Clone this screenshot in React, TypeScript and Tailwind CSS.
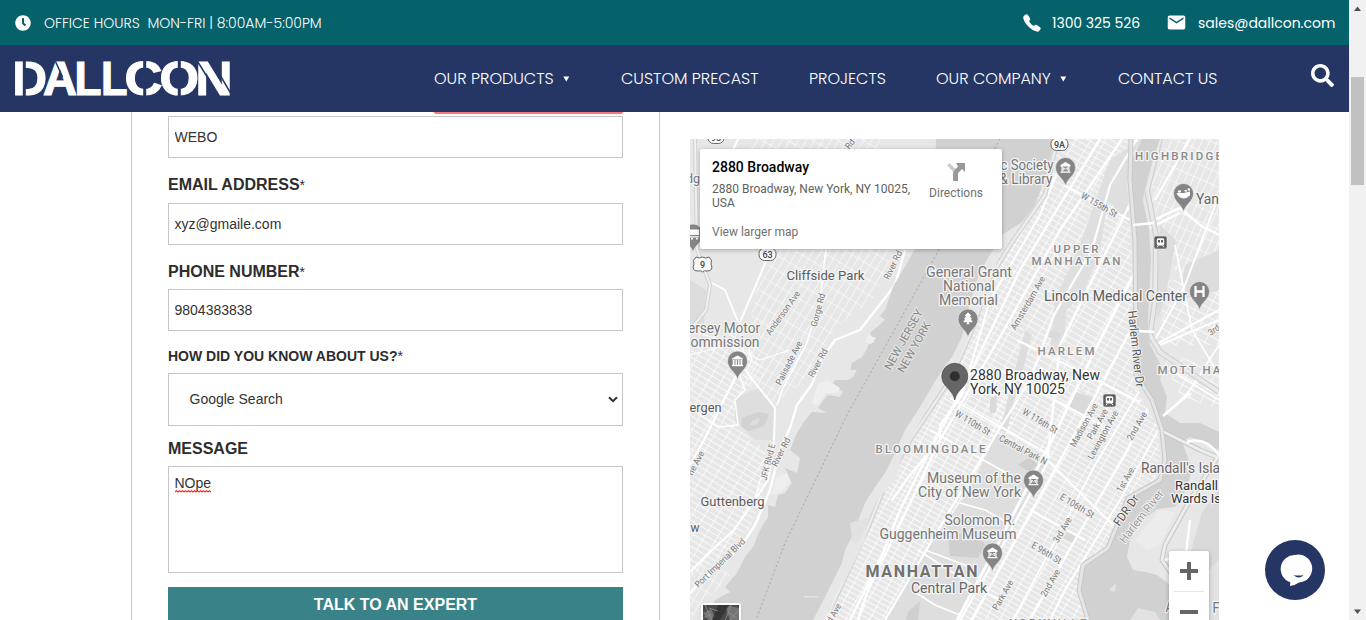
import React from "react";
import { FaClock, FaSearch, FaTree } from "react-icons/fa";
import { IoCall } from "react-icons/io5";
import { MdEmail } from "react-icons/md";

const POPPINS = "font-['Poppins','Inter','Liberation_Sans',sans-serif]";
const ARIAL = "font-['Liberation_Sans',Arial,sans-serif]";

/* ---------- header ---------- */

const logoGlyphs = [
  { c: "D", x: 12.5, w: 34.5 },
  { c: "A", x: 43, w: 34 },
  { c: "L", x: 74.5, w: 27 },
  { c: "L", x: 101, w: 26.5 },
  { c: "C", x: 124.5, w: 38 },
  { c: "O", x: 159.5, w: 39.5 },
  { c: "N", x: 195.5, w: 37 },
];

function Logo() {
  return (
    <svg width="217" height="38" viewBox="14 59 217 38" aria-label="Dallcon">
      <g fill="#fff" fontFamily="Liberation Sans" fontWeight="700" fontSize="48.5">
        {logoGlyphs.map((g, i) => (
          <text key={i} x={g.x} y="93.7" textLength={g.w} lengthAdjust="spacingAndGlyphs" stroke="#fff" strokeWidth="1.2">
            {g.c}
          </text>
        ))}
      </g>
      <g stroke="#253665" fill="none">
        <path d="M24.3 58V98M144.7 58V69M144.7 86V98M179.3 58V98" strokeWidth="3" />
        <path d="M55.5 60.5L62.5 76M197 59.5L209 79M220 74L231.5 93.5" strokeWidth="1.5" />
      </g>
    </svg>
  );
}

function Caret() {
  return (
    <svg width="7" height="6" viewBox="0 0 7 6" className="ml-[9px]">
      <path d="M.3 .5h6L3.3 5.5z" fill="#fff" />
    </svg>
  );
}

function Header() {
  return (
    <header className={`text-white ${POPPINS}`}>
      <div className="flex h-[45px] items-center bg-[#05626b] pl-[15px] pr-[15px] text-sm">
        <FaClock size={16} />
        <span className="ml-[13px] whitespace-pre font-light">OFFICE HOURS  MON-FRI | 8:00AM-5:00PM</span>
        <div className="ml-auto flex items-center">
          <IoCall size={20} />
          <span className="ml-[10px] w-[89px] whitespace-nowrap tracking-[-0.05px]">1300 325 526</span>
          <MdEmail size={21} className="ml-[25px]" />
          <span className="ml-[11px] w-[136px] whitespace-nowrap">sales@dallcon.com</span>
        </div>
      </div>
      <div className="flex h-[67px] items-center bg-[#253665] pl-[14px] pr-[15px]">
        <Logo />
        <nav className="ml-[203px] flex items-center whitespace-nowrap text-base font-light">
          <a className="flex w-[187px] items-center">OUR PRODUCTS<Caret /></a>
          <a className="w-[188px]">CUSTOM PRECAST</a>
          <a className="w-[127px]">PROJECTS</a>
          <a className="flex w-[182px] items-center">OUR COMPANY<Caret /></a>
          <a>CONTACT US</a>
        </nav>
        <FaSearch size={23} className="-mt-[7px] ml-auto" />
      </div>
    </header>
  );
}

/* ---------- form ---------- */

const label = "text-base font-bold leading-6 text-[#2d2d2d]";
const field = "block h-[42px] w-full border border-[#c6c6c6] bg-white px-[5.5px] text-sm text-[#333] outline-none";

function Star() {
  return <span className="text-sm font-normal">*</span>;
}

function ContactForm() {
  return (
    <form className={`h-[508px] w-[529px] overflow-hidden border-x border-[#c6c6c6] pl-[36px] pr-[36px] ${ARIAL}`}>
      <div className="mb-[2px] ml-auto h-[2px] w-[189px] rounded-b bg-[#f4777b]" />
      <input className={field} defaultValue="WEBO" />
      <div className={`h-[45px] pt-[15px] ${label}`}>EMAIL ADDRESS<Star /></div>
      <input className={field} defaultValue="xyz@gmaile.com" />
      <div className={`h-[44px] pt-[15px] ${label}`}>PHONE NUMBER<Star /></div>
      <input className={field} defaultValue="9804383838" />
      <div className="h-[42px] pt-[13px] text-sm font-bold leading-6 text-[#2d2d2d]">HOW DID YOU KNOW ABOUT US?<Star /></div>
      <div className="flex h-[53px] items-center justify-between border border-[#c6c6c6] pb-px pl-[20.5px] pr-1 text-sm text-[#333]">
        <span>Google Search</span>
        <svg width="10" height="7" viewBox="0 0 10 7">
          <path d="M1 1.2L5 5.2L9 1.2" fill="none" stroke="#333" strokeWidth="2" />
        </svg>
      </div>
      <div className={`h-[40px] pt-[11px] ${label}`}>MESSAGE</div>
      <div className="h-[107px] border border-[#c6c6c6] px-[5.5px] pt-[6px] text-sm text-[#333]">
        <span className="inline-block">
          NOpe
          <svg width="37" height="3" viewBox="0 0 37 3" className="-mt-[3px] block">
            <path d="M0 2L1.5 .7L3 2L4.5 .7L6 2L7.5 .7L9 2L10.5 .7L12 2L13.5 .7L15 2L16.5 .7L18 2L19.5 .7L21 2L22.5 .7L24 2L25.5 .7L27 2L28.5 .7L30 2L31.5 .7L33 2L34.5 .7L36 2" fill="none" stroke="#f22" strokeWidth="1.1" />
          </svg>
        </span>
      </div>
      <button type="button" className="mt-[14px] h-[34px] w-full bg-[#388288] pt-px text-base font-bold text-white">TALK TO AN EXPERT</button>
    </form>
  );
}

/* ---------- map ---------- */

const HUDSON =
  "M936 139L934 200L915 249L907 263L893 287L885 310L880 316L885 320L877 327L870 333L875 342L868 345L868 347L862 357L852 363L850 370L857 370L853 377L848 380L835 380L832 385L843 392L840 397L828 395L822 402L818 408L827 413L812 412L803 423L795 437L790 450L800 458L797 473L785 468L792 483L785 493L778 495L775 507L768 505L768 517L760 530L753 547L745 557L737 573L725 587L730 592L715 600L705 620L813 620L822 603L832 583L842 563L845 550L852 537L857 523L865 503L875 487L885 473L895 453L905 430L918 410L930 390L942 370L952 357L962 337L968 310L978 277L985 263L1002 235L1022 222L1035 205L1047 173L1053 147L1056 139Z";
const HARLEM_RIVER =
  "M1142 139L1132 160L1129 185L1133 225L1135 250L1136 300L1139 340L1140 380L1142 387L1153 403L1160 420L1163 437L1165 457L1163 473L1155 483L1143 490L1127 503L1117 527L1107 547L1093 558L1082 570L1078 583L1082 603L1088 620L1170 620L1170 585L1157 575L1150 573L1133 570L1127 557L1130 540L1140 523L1157 509L1175 507L1186 490L1192 470L1188 458L1182 442L1190 437L1219 450L1219 432L1200 423L1180 423L1165 413L1167 397L1160 380L1162 367L1150 345L1148 320L1151 260L1149 230L1143 200L1148 175L1160 139Z";
const MANHATTAN =
  "M1056 139L1053 147L1047 173L1035 205L1022 222L1002 250L992 275L978 310L968 337L958 360L945 382L932 400L918 425L902 455L895 480L877 500L868 520L865 540L850 570L838 590L824 620L1086 620L1080 590L1084 567L1105 547L1117 527L1127 500L1155 480L1160 455L1157 425L1142 400L1136 380L1134 300L1130 225L1127 185L1131 155L1142 139Z";
const JERSEY =
  "M690 139H936L934 200L915 249L893 287L880 316L868 333L850 363L830 380L810 412L795 437L785 468L768 505L750 547L725 587L700 620H690Z";
const BRONX = "M1160 139L1148 175L1143 200L1149 230L1151 260L1148 320L1150 345L1162 367L1172 400L1219 440V139Z";

interface GridProps { id: string; w: number; h: number; angle: number; sw: number }
function StreetGrid({ id, w, h, angle, sw }: GridProps) {
  return (
    <pattern id={id} width={w} height={h} patternUnits="userSpaceOnUse" patternTransform={`rotate(${angle})`}>
      <path d={`M0 0H${w}M0 0V${h}`} stroke="#fff" strokeWidth={sw} fill="none" />
    </pattern>
  );
}

type L = [string, number, number, number, string?, number?, number?];
/* text, x (centre), baseline, width, colour, size, rotation */
const labels: L[] = [
  ["Cliffside Park", 825.5, 280, 78, "#5c5c5c", 13.5],
  ["General Grant", 969, 277, 86, "#777", 14],
  ["National", 969, 291, 52, "#777", 14],
  ["Memorial", 968.5, 305, 59, "#777", 14],
  ["ersey Motor", 724, 333, 72, "#777", 14],
  ["ommission", 725, 347, 69, "#777", 14],
  ["ergen", 705.5, 412, 32, "#5c5c5c", 13.5],
  ["Guttenberg", 732.5, 506, 64, "#5c5c5c", 13.5],
  ["w", 695, 532, 9, "#5c5c5c", 13.5],
  ["dg", 693, 183, 14, "#777", 13],
  ["c Society", 1027, 170, 53, "#777", 14],
  ["& Library", 1026, 184, 53, "#777", 14],
  ["Lincoln Medical Center", 1115.5, 301, 143, "#5c5c5c", 14],
  ["Museum of the", 974, 483, 94, "#777", 14],
  ["City of New York", 969.5, 497, 103, "#777", 14],
  ["Solomon R.", 980, 525, 71, "#777", 14],
  ["Guggenheim Museum", 948, 539, 137, "#777", 14],
  ["Central Park", 949, 593, 76, "#666", 14],
  ["Randall's Isla", 1180.5, 473, 79, "#666", 14],
  ["Randall", 1196.5, 490, 43, "#333", 13],
  ["Wards Is", 1196, 503, 50, "#333", 13],
  ["Yan", 1207.5, 204, 23, "#666", 14],
  ["River Rd", 893, 268, 31, "#777", 9, -64],
  ["Rd", 850, 147, 10, "#777", 9, -52],
  ["Anderson Ave", 783, 316, 52, "#777", 9, -54],
  ["Gorge Rd", 818, 313, 34, "#777", 9, -75],
  ["Palisade Ave", 789, 366, 48, "#777", 9, -63],
  ["River Rd", 818, 366, 31, "#777", 9, -62],
  ["JFK Blvd E", 768, 465, 37, "#777", 9, -76],
  ["River Rd", 781, 455, 31, "#777", 9, -63],
  ["ne Ave", 696, 466, 26, "#777", 9, -62],
  ["Port Imperial Blvd", 720, 566, 66, "#777", 9, -44],
  ["Amsterdam Ave", 1028, 306, 60, "#777", 9, -60],
  ["W 155th St", 1099, 208, 40, "#777", 9.5, 30],
  ["W 110th St", 972.5, 426, 39, "#777", 9.5, 31],
  ["W 116th St", 1040, 424, 39, "#777", 9.5, 31],
  ["Central Park N", 1023, 453, 53, "#777", 9.5, 28],
  ["Madison Ave", 1084, 428, 48, "#777", 9, -61],
  ["Park Ave", 1097.5, 427, 33, "#777", 9, -61],
  ["Lexington Ave", 1103, 438, 54, "#777", 9, -61],
  ["2nd Ave", 1137, 429, 31, "#777", 9, -60],
  ["1st Ave.", 1126, 482, 29, "#777", 9, -60],
  ["E 106th St", 1077, 509, 38, "#777", 9.5, 31],
  ["3rd Ave", 1062.5, 533, 28, "#777", 9, -60],
  ["E 96th St", 1046.5, 556, 33, "#777", 9.5, 31],
  ["2nd Ave", 1050.5, 586, 30, "#777", 9, -60],
  ["Park Ave", 1003, 598, 33, "#777", 9, -60],
  ["d Ave", 834, 616, 20, "#777", 9, -60],
  ["3rd", 1214, 333, 12, "#777", 9, -35],
  ["Harlem River", 1142, 520, 64, "#999", 11.5, -52],
  ["FDR Dr", 1127, 514, 35, "#555", 12, -55],
  ["Harlem River Dr", 1135, 352, 77, "#555", 12, 84],
  ["A", 1169.5, 612, 8, "#777", 14],
  ["F", 1216, 613, 7, "#777", 14],
];

const districts: L[] = [
  ["HIGHBRIDGE", 1178.5, 160, 87, "#8a8a8a", 11.5],
  ["UPPER", 1076, 253, 45, "#8a8a8a", 11.5],
  ["MANHATTAN", 1076, 265, 89, "#8a8a8a", 11.5],
  ["HARLEM", 1066, 355, 57, "#8a8a8a", 11.5],
  ["MOTT HA", 1189, 374, 63, "#8a8a8a", 11.5],
  ["BLOOMINGDALE", 930.5, 453, 110, "#8a8a8a", 11.5],
  ["MANHATTAN", 921.5, 577, 112, "#707070", 16],
  ["YORKVILLE", 1048, 628, 77, "#8a8a8a", 12],
];

interface MapLabelProps { l: L; weight: number; spaced?: boolean }
function MapLabel({ l, weight, spaced }: MapLabelProps) {
  const [t, x, y, w, fill, size, rot] = l;
  return (
    <text
      x={x - w / 2}
      y={y}
      textLength={w}
      lengthAdjust={spaced ? "spacing" : "spacingAndGlyphs"}
      fill={fill}
      fontSize={size}
      fontWeight={weight}
      transform={rot ? `rotate(${rot} ${x} ${y - 3})` : undefined}
      stroke="#f4f4f4"
      strokeWidth={rot ? 2 : 2.6}
      strokeLinejoin="round"
      paintOrder="stroke"
    >
      {t}
    </text>
  );
}

function Museum() {
  return (
    <g fill="#fff">
      <path d="M-5 -2.5L0 -5.5L5 -2.5V-1H-5ZM-5 4H5V5.3H-5ZM-4 -1H-2.8V4H-4ZM2.8 -1H4V4H2.8Z" />
      <path d="M-1.8 3V0L0 1.8L1.8 0V3" fill="none" stroke="#fff" strokeWidth="1" />
    </g>
  );
}

function Pin({ x, y, children }: { x: number; y: number; children: React.ReactNode }) {
  return (
    <g transform={`translate(${x} ${y})`}>
      <path d="M0 18.5C-1.5 11-10 8-10 0A10 10 0 0 1 10 0C10 8 1.5 11 0 18.5Z" fill="#858585" stroke="#eee" strokeWidth=".6" />
      {children}
    </g>
  );
}

function Station({ x, y }: { x: number; y: number }) {
  return (
    <g transform={`translate(${x} ${y})`}>
      <rect x="-6.5" y="-6.5" width="13" height="13" rx="2" fill="#5f5f5f" stroke="#eee" strokeWidth=".6" />
      <rect x="-3.7" y="-4.3" width="7.4" height="7.4" rx="1.5" fill="#fff" />
      <path d="M-2.5 -2.5H-.5V0H-2.5ZM.5 -2.5H2.5V0H.5Z" fill="#5f5f5f" />
      <path d="M-2.2 3L-3.4 4.8M2.2 3L3.4 4.8" stroke="#fff" />
    </g>
  );
}

function RouteShield({ x, y, t, w }: { x: number; y: number; t: string; w: number }) {
  return (
    <g>
      <rect x={x - w / 2} y={y - 6} width={w} height="12.5" rx="5.5" fill="#fafafa" stroke="#666" strokeWidth="1" />
      <text x={x} y={y + 3.5} textAnchor="middle" fontSize="9" fontWeight="500" fill="#444">{t}</text>
    </g>
  );
}

function CityMap() {
  return (
    <svg width="529" height="481" viewBox="690 139 529 481" className="block" fontFamily="Roboto, sans-serif">
      <defs>
        <StreetGrid id="gManhattan" w={10.5} h={5} angle={29} sw={1.5} />
        <StreetGrid id="gUptown" w={13} h={5.8} angle={30} sw={1.4} />
        <StreetGrid id="gEast" w={12.5} h={5} angle={30} sw={1.5} />
        <StreetGrid id="gJerseyN" w={7} h={13} angle={31} sw={1.1} />
        <StreetGrid id="gJerseyS" w={11} h={5.6} angle={31} sw={1.3} />
        <StreetGrid id="gBronx" w={7} h={13} angle={24} sw={1.2} />
        <StreetGrid id="gMott" w={12} h={8} angle={28} sw={1.3} />
        <clipPath id="cM"><path d={MANHATTAN} /></clipPath>
        <clipPath id="cJ"><path d={JERSEY} /></clipPath>
        <clipPath id="cB"><path d={BRONX} /></clipPath>
      </defs>
      <rect x="690" y="139" width="529" height="481" fill="#e7e7e7" />

      <g clipPath="url(#cJ)">
        <path d="M765 249L880 200L890 262L875 297L840 325L815 362L800 385L772 405L745 380L752 310Z" fill="url(#gJerseyN)" />
        <path d="M690 350L740 330L765 375L735 400L735 425L752 440L766 450L762 500L748 530L715 562L690 575Z" fill="url(#gJerseyS)" />
        <path d="M690 575L715 562L730 575L690 620Z" fill="url(#gJerseyN)" />
        <path d="M750 139H880V150H750Z" fill="url(#gJerseyN)" />
        <path d="M690 280L706 290L704 325L690 330Z" fill="#dcdcdc" />
        <path d="M735 398L758 388L776 408L772 440L755 440L735 420Z" fill="#dedede" />
        <path d="M742 418L758 412L769 414L764 426L748 431L741 426Z" fill="#d2d2d2" />
        <path d="M752 421L760 418L757 425L750 425Z" fill="#dedede" />
        <g stroke="#fff" fill="none" strokeLinejoin="round">
          <path d="M770 252L740 322L744 360L730 388L704 440L690 465" strokeWidth="2" />
          <path d="M826 249L820 300L806 345L783 388L777 405" strokeWidth="1.6" />
          <path d="M745 370L775 408L774 440L768 480L755 500L734 530L712 550L690 572" strokeWidth="2" />
          <path d="M905 250L895 285L860 330L835 340L821 360L812 384L797 405L790 428L780 450L770 490L755 525L742 545L722 565L700 582L690 594" strokeWidth="2.4" />
          <path d="M690 408L718 427L738 425L735 400L745 390L738 370" strokeWidth="1.5" />
          <path d="M710 282L725 290L738 322" strokeWidth="1.8" />
          <path d="M746 372L752 360L748 346M770 460L760 480L755 500" strokeWidth="1.4" />
          <path d="M690 355L728 345L760 360L790 350M690 330L720 340" strokeWidth="1.2" />
        </g>
        <path d="M695 139L697 249L710 285L706 310L690 330" stroke="#d2d2d2" strokeWidth="4" fill="none" />
        <path d="M695 139L697 249L710 285L706 310L690 330" stroke="#f1f1f1" strokeWidth="2" fill="none" />
        <path d="M738 139L710 200L700 240" stroke="#fff" strokeWidth="2" fill="none" />
      </g>

      <g clipPath="url(#cM)">
        <rect x="800" y="390" width="240" height="230" fill="url(#gManhattan)" />
        <rect x="940" y="139" width="210" height="251" fill="url(#gUptown)" />
        <path d="M1020 390H1170V620H960Z" fill="#e7e7e7" />
        <path d="M1000 390H1170V620H950Z" fill="url(#gEast)" />
        <path d="M1110 160L1142 139L1128 185L1130 225L1108 200L1100 250L1085 290L1067 310L1062 350L1050 350L1055 300L1078 250Z" fill="#dfdfdf" />
        <path d="M1000 430L1025 330L1032 335L1006 433Z" fill="#dddddd" />
        <path d="M990 398L997 395L996 412L990 414Z" fill="#dadada" />
        <path d="M1076 392L1095 398L1088 416L1068 408Z" fill="#dadada" />
        <path d="M1050 330L1060 333L1058 340L1048 337ZM1068 530L1078 535L1073 543L1063 538Z" fill="#dadada" />
        <path d="M997 433L1047 463L1027 503L1000 550L960 620H885L918 560L968 493Z" fill="#dedede" />
        <path d="M948 537L975 530L985 545L978 558L950 556Z" fill="#cfcfcf" />
        <path d="M1018 465L1030 457L1038 465L1030 472ZM908 612L920 601L918 620H906Z" fill="#cfcfcf" />
        <g stroke="#fff" fill="none" strokeLinejoin="round">
          <path d="M1100 139L1020 270L957 400L930 450L900 510L880 560L850 620" strokeWidth="2.4" />
          <path d="M1122 139L1060 230L1004 330L940 440L902 520L868 590L858 620" strokeWidth="2.4" />
          <path d="M1060 165L1040 215L990 300L962 395L940 425L940 440L910 475L892 500" strokeWidth="2.2" />
          <path d="M1137 139L1110 185L1092 250L1054 315L1030 380L997 433L950 510L885 620" strokeWidth="2.2" />
          <path d="M1132 200L1060 345L1047 463L1000 550L960 620" strokeWidth="2.4" />
          <path d="M1136 270L1095 350L1052 440L1000 540L957 620" strokeWidth="2.8" />
          <path d="M1136 320L1105 378L1063 455L1010 550L972 620" strokeWidth="2.4" />
          <path d="M1140 390L1095 465L1045 560L1013 620" strokeWidth="1.8" />
          <path d="M1152 400L1125 455L1075 540L1030 620" strokeWidth="2" />
          <path d="M1161 425L1120 500L1065 590L1050 620" strokeWidth="2" />
          <path d="M1064 185L1130 220M1017 340L1140 402M950 398L1050 455M1042 455L1115 527M1000 370L1110 430M1030 510L1085 540M930 430L1010 475M918 550L980 590L1000 600" strokeWidth="2" />
          <path d="M960 503L985 510L1010 524M925 550L965 565L990 590M915 592L935 605L960 615" strokeWidth="1.6" />
        </g>
        <g fill="none">
          <path d="M1056 145L1045 195L1010 245L990 278L972 330L950 380L910 440L885 485L865 535L830 610" stroke="#d5d5d5" strokeWidth="5" />
          <path d="M1056 145L1045 195L1010 245L990 278L972 330L950 380L910 440L885 485L865 535L830 610" stroke="#ededed" strokeWidth="2.2" />
        </g>
      </g>

      <g clipPath="url(#cB)">
        <path d="M1165 139H1219V280H1180L1154 230L1150 190Z" fill="url(#gBronx)" />
        <path d="M1165 280H1219V345H1160Z" fill="url(#gMott)" />
        <path d="M1158 350L1219 370V410L1180 395Z" fill="url(#gMott)" />
        <path d="M1160 225L1176 240L1165 300L1157 320ZM1185 265L1219 250V290L1180 300Z" fill="#dddddd" />
        <g stroke="#fff" fill="none">
          <path d="M1154 220L1180 208L1200 225L1219 235M1150 228L1180 213" strokeWidth="2.4" />
          <path d="M1219 195L1185 285L1155 340M1190 139L1155 200M1219 310L1155 345M1160 345L1219 320" strokeWidth="2" />
          <path d="M1175 245L1192 330L1219 375M1168 413L1190 390L1219 345M1170 370L1219 400" strokeWidth="1.6" />
        </g>
        <path d="M1160 139L1147 190L1156 235L1155 300L1150 335L1160 352L1219 392" stroke="#d0d0d0" strokeWidth="6" fill="none" />
        <path d="M1160 139L1147 190L1156 235L1155 300L1150 335L1160 352L1219 392" stroke="#e9e9e9" strokeWidth="3.5" fill="none" />
      </g>

      <path d={HUDSON} fill="#d1d1d1" />
      <path d={HARLEM_RIVER} fill="#d1d1d1" />
      <path d="M818 383L828 380L840 388L838 393L826 393L818 405L812 404ZM776 478L787 473L790 482L782 492L772 495ZM868 335L876 338L871 344L865 342Z" fill="#efefef" />
      <path d="M850 523L868 517L866 528L857 545L852 540ZM804 596H818V597.5H804Z" fill="#e2e2e2" />
      <path d="M1188 620L1200 585L1219 560V620Z" fill="#e2e2e2" />
      <path d="M1191 551L1202 512L1219 490V560L1205 575Z" fill="#dadada" />
      <path d="M1135 540L1160 510L1175 512L1160 545L1148 550Z" fill="#ececec" />
      <path d="M1130 620L1138 608L1155 612L1160 620Z" fill="#e2e2e2" />
      <path d="M1109 590L1116 583L1115 592Z" fill="#e2e2e2" />
      <g fill="none" strokeLinejoin="round">
        <path d="M1131 139L1130 180L1135 240L1136 375L1152 400L1162 430L1165 460L1160 480L1128 498L1108 548L1083 565L1079 590L1088 620" stroke="#c8c8c8" strokeWidth="5" />
        <path d="M1131 139L1130 180L1135 240L1136 375L1152 400L1162 430L1165 460L1160 480L1128 498L1108 548L1083 565L1079 590L1088 620" stroke="#e5e5e5" strokeWidth="3" />
        <path d="M1164 432L1200 450L1219 458M1219 455L1190 500L1165 545L1162 560L1176 580" stroke="#c6c6c6" strokeWidth="5" />
        <path d="M1164 432L1200 450L1219 458M1219 455L1190 500L1165 545L1162 560L1176 580" stroke="#ededed" strokeWidth="3" />
        <path d="M1133 225L1154 223M1139 331L1154 332M1163 416L1190 393M1187 442Q1205 436 1219 455M1190 520L1186 553L1165 560" stroke="#fff" strokeWidth="2.4" />
        <path d="M1000 139L900 320L848 413L785 543L756 620" stroke="#a8a8a8" strokeWidth="1" strokeDasharray="2 2.5" />
      </g>

      <RouteShield x={716} y={137} t="95" w={16} />
      <RouteShield x={1059.5} y={144} t="9A" w={17} />
      <RouteShield x={767.5} y={254} t="63" w={17} />
      <path d="M696 257Q699 259 702.5 257Q706 259 709 257Q713 260 711 264Q714 271 707 271Q704 270 702.5 272Q701 270 698 271Q691 271 694 264Q692 260 696 257Z" fill="#fafafa" stroke="#666" />
      <text x="702.5" y="268" textAnchor="middle" fontSize="9" fontWeight="500" fill="#444">9</text>

      <g transform="rotate(-61 907 341)" fontSize="11" fill="#858585" stroke="#e5e5e5" strokeWidth="2" paintOrder="stroke">
        <text x="873" y="341" textLength="67" lengthAdjust="spacingAndGlyphs">NEW JERSEY</text>
        <text x="877" y="354" textLength="56" lengthAdjust="spacingAndGlyphs">NEW YORK</text>
      </g>
      {labels.map((l, i) => <MapLabel key={i} l={l} weight={400} />)}
      {districts.map((l, i) => <MapLabel key={i} l={l} weight={l[5] === 16 ? 700 : 500} spaced />)}

      <Pin x={1065.5} y={167.5}><Museum /></Pin>
      <Pin x={1033.5} y={480}><Museum /></Pin>
      <Pin x={992.5} y={553}><Museum /></Pin>
      <Pin x={737.5} y={361}>
        <path d="M-5.5 -2.5L0 -5.5L5.5 -2.5V-1.5H-5.5ZM-5.5 3.7H5.5V5.2H-5.5ZM-4.8 -1H-3V4H-4.8ZM-2 -1H-.6V4H-2ZM.6 -1H2V4H.6ZM3 -1H4.8V4H3Z" fill="#fff" />
      </Pin>
      <Pin x={968} y={319}>
        <g transform="translate(-5 -6.5)" color="#fff"><FaTree width={10} height={12} style={{ width: 10, height: 12 }} /></g>
      </Pin>
      <Pin x={1183.5} y={193.5}>
        <path d="M-7 -.5H0L6.5 -2V2Q4 4.5 0 5Q-5.5 4-7 -.5ZM-5.5 -3H-2.5V-1H-5.5ZM1 -3.5H3.5V-2H1ZM4.2 -5H6.5V-3H4.2Z" fill="#fff" />
      </Pin>
      <Pin x={1199.5} y={291.5}><path d="M-4 -5.5V5.5M4 -5.5V5.5M-4 0H4" stroke="#fff" strokeWidth="2.3" fill="none" /></Pin>
      <Pin x={693} y={234}><path d="M-5 -4.5H6V1H-3ZM-3 2.2H6V3.4H-3ZM-2 4H0V5.5H-2ZM3 4H5V5.5H3Z" fill="#fff" /></Pin>
      <Station x={1160.5} y={242.5} />
      <Station x={1109.5} y={400.5} />

      <path d="M954.8 400C953 389 941.8 387 941.8 376.3A13 13 0 0 1 967.8 376.3C967.8 387 956.6 389 954.8 400Z" fill="#666" stroke="#4d4d4d" strokeWidth=".7" />
      <circle cx="954.8" cy="376.3" r="5" fill="#303030" />
      <g fontSize="14" fill="#333" stroke="#fff" strokeWidth="2.6" strokeLinejoin="round" paintOrder="stroke">
        <text x="970" y="380" textLength="130" lengthAdjust="spacingAndGlyphs">2880 Broadway, New</text>
        <text x="970" y="394" textLength="95" lengthAdjust="spacingAndGlyphs">York, NY 10025</text>
      </g>
    </svg>
  );
}

function MapPanel() {
  return (
    <section className="relative mt-[27px] h-[481px] w-[529px] overflow-hidden font-['Roboto',sans-serif]">
      <CityMap />
      <div className="absolute left-[10px] top-[10px] flex h-[100px] w-[302px] justify-between rounded-[2px] bg-white pl-3 pr-[19px] shadow-[0_1px_4px_rgba(0,0,0,0.3)]">
        <div className="w-[205px] pt-[9px]">
          <div className="text-sm font-medium leading-[18px] text-black">2880 Broadway</div>
          <div className="mt-[6px] whitespace-nowrap text-xs leading-[14px] text-[#5f5f5f]">2880 Broadway, New York, NY 10025,<br />USA</div>
          <div className="mt-[15px] text-xs leading-[14px] text-[#707070]">View larger map</div>
        </div>
        <div className="flex flex-col items-center pt-[13px]">
          <svg width="20" height="20" viewBox="0 0 20 20">
            <path d="M1 3.5L3.5 1L10 7.5L7.5 10Z" fill="#ccc" />
            <path d="M7 19V12Q7 9 9 7.5L12 4.5L10 1H19V10L16 7L12.5 10.5Q12 11 12 13V19Z" fill="#999" />
          </svg>
          <div className="mt-[4px] text-xs leading-[15px] text-[#707070]">Directions</div>
        </div>
      </div>
      <div className="absolute left-[11px] top-[464px] h-10 w-10 overflow-hidden rounded-[2px] border-2 border-white bg-[#4a4a4a] shadow">
        <svg width="36" height="36" viewBox="0 0 36 36">
          <path d="M0 8L8 4L14 16L6 16ZM22 0L36 3V18L27 16Z" fill="#747474" />
          <path d="M15 0H26L15 18H8Z" fill="#353535" />
          <path d="M2 0L9 15M28 0L22 16M36 5L27 15M0 13L8 9M6 3L15 6M26 8L34 13" stroke="#929292" strokeWidth=".8" />
        </svg>
      </div>
      <div className="absolute left-[479px] top-[412px] flex h-[81px] w-10 flex-col items-center rounded-[2px] bg-white shadow-[0_1px_4px_rgba(0,0,0,0.3)]">
        <svg width="40" height="80" viewBox="0 0 40 80">
          <path d="M11 20H29M20 11V29M11 61H29" stroke="#666" strokeWidth="4" />
          <path d="M5 40.5H35" stroke="#e6e6e6" />
        </svg>
      </div>
    </section>
  );
}

/* ---------- page ---------- */

export default function App() {
  return (
    <div className="relative flex h-[620px] w-[1366px] overflow-hidden bg-white">
      <div className="w-[1349px]">
        <Header />
        <main className="flex gap-[30px] pl-[131px]">
          <ContactForm />
          <MapPanel />
        </main>
      </div>
      <aside className="flex w-[17px] flex-col items-center bg-[#f1f1f1]">
        <svg width="17" height="17" viewBox="0 0 17 17"><path d="M8.5 6.5L12 11H5Z" fill="#505050" /></svg>
        <div className="mt-[60px] h-[108px] w-[13px] bg-[#c1c1c1]" />
        <svg width="17" height="17" viewBox="0 0 17 17" className="mt-auto"><path d="M8.5 11L12 6.5H5Z" fill="#505050" /></svg>
      </aside>
      <button type="button" className="absolute left-[1265px] top-[540px] h-[60px] w-[60px] rounded-full bg-[#253665]">
        <svg width="60" height="60" viewBox="0 0 60 60">
          <path d="M30 15A14 14 0 1 1 34 42.6Q31 45 25 46L25.3 42.3A14 14 0 0 1 30 15Z" fill="#fff" />
          <path d="M28.5 35Q33.5 36 38.5 35Q34 40 28.5 35Z" fill="#253665" />
        </svg>
      </button>
    </div>
  );
}
